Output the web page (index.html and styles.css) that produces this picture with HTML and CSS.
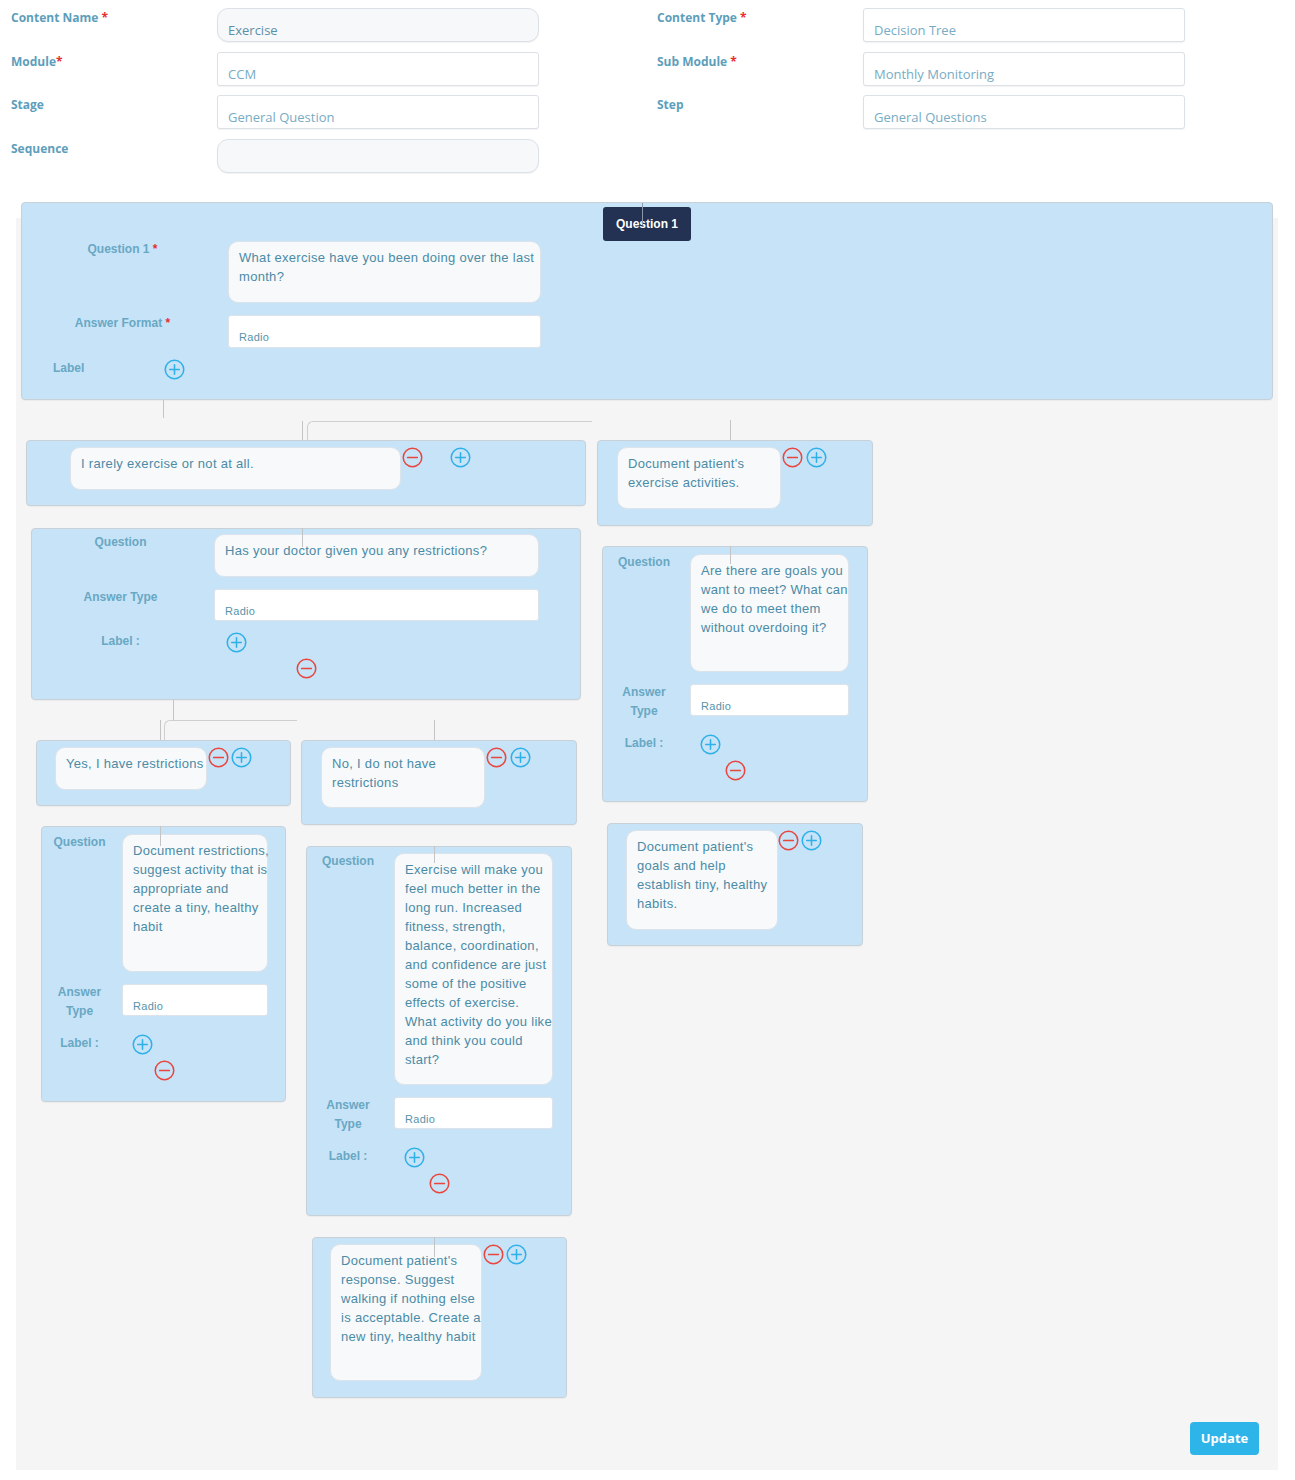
FILE: index.html
```html
<!DOCTYPE html>
<html>
<head>
<meta charset="utf-8">
<title>Decision Tree</title>
<link rel="stylesheet" href="styles.css">
</head>
<body>
<div class="form">
  <div class="fcol">
    <div class="flabel">Content Name <span class="req">*</span></div>
    <div class="finput soft dark">Exercise</div>
    <div class="flabel">Module<span class="req">*</span></div>
    <div class="finput">CCM</div>
    <div class="flabel">Stage</div>
    <div class="finput">General Question</div>
    <div class="flabel">Sequence</div>
    <div class="finput soft"></div>
  </div>
  <div class="fcol">
    <div class="flabel">Content Type <span class="req">*</span></div>
    <div class="finput">Decision Tree</div>
    <div class="flabel">Sub Module <span class="req">*</span></div>
    <div class="finput">Monthly Monitoring</div>
    <div class="flabel">Step</div>
    <div class="finput">General Questions</div>
  </div>
</div>

<div class="canvas">
  <div class="node root">
    <div class="badge">Question 1</div>
    <div class="qgrid root-grid">
      <div class="qlabel">Question 1 <span class="req">*</span></div>
      <div class="tbox h62">What exercise have you been doing over the last<br>month?</div>
      <div class="qlabel">Answer Format <span class="req">*</span></div>
      <div class="sel h33">Radio</div>
    </div>
    <div class="root-label-row">
      <span class="qlabel root-lbl">Label</span>
      <svg class="ico" viewBox="0 0 22 22"><circle cx="11" cy="11" r="9.7" class="c-plus"/><path d="M6 11h10M11 6v10" class="l-plus"/></svg>
    </div>
  </div>

  <div class="tree">
    <div class="branch br-a">
      <div class="node ans ans-a">
        <div class="tbox w331 h43">I rarely exercise or not at all.</div>
        <svg class="ico minus ml1" viewBox="0 0 22 22"><circle cx="11" cy="11" r="9.7" class="c-minus"/><path d="M6 11h10" class="l-minus"/></svg>
        <svg class="ico ml27" viewBox="0 0 22 22"><circle cx="11" cy="11" r="9.7" class="c-plus"/><path d="M6 11h10M11 6v10" class="l-plus"/></svg>
      </div>
      <div class="node q q-a">
        <div class="qgrid g-a">
          <div class="qlabel">Question</div>
          <div class="tbox h43">Has your doctor given you any restrictions?</div>
          <div class="qlabel">Answer Type</div>
          <div class="sel h32">Radio</div>
          <div class="qlabel">Label :</div>
          <div class="icons">
            <svg class="ico plus pl12" viewBox="0 0 22 22"><circle cx="11" cy="11" r="9.7" class="c-plus"/><path d="M6 11h10M11 6v10" class="l-plus"/></svg>
            <svg class="ico minus2 ml82" viewBox="0 0 22 22"><circle cx="11" cy="11" r="9.7" class="c-minus"/><path d="M6 11h10" class="l-minus"/></svg>
          </div>
        </div>
      </div>

      <div class="subtree">
        <div class="branch br-a1">
          <div class="node ans ans-a1">
            <div class="tbox w152 h43">Yes, I have restrictions</div>
            <svg class="ico ml1" viewBox="0 0 22 22"><circle cx="11" cy="11" r="9.7" class="c-minus"/><path d="M6 11h10" class="l-minus"/></svg>
            <svg class="ico ml2" viewBox="0 0 22 22"><circle cx="11" cy="11" r="9.7" class="c-plus"/><path d="M6 11h10M11 6v10" class="l-plus"/></svg>
          </div>
          <div class="node q q-a1">
            <div class="qgrid g-a1">
              <div class="qlabel">Question</div>
              <div class="tbox h138">Document restrictions,<br>suggest activity that is<br>appropriate and<br>create a tiny, healthy<br>habit</div>
              <div class="qlabel">Answer<br>Type</div>
              <div class="sel h32">Radio</div>
              <div class="qlabel lrow">Label :</div>
              <div class="icons lrow">
                <svg class="ico plus pl9" viewBox="0 0 22 22"><circle cx="11" cy="11" r="9.7" class="c-plus"/><path d="M6 11h10M11 6v10" class="l-plus"/></svg>
                <svg class="ico minus2 ml31" viewBox="0 0 22 22"><circle cx="11" cy="11" r="9.7" class="c-minus"/><path d="M6 11h10" class="l-minus"/></svg>
              </div>
            </div>
          </div>
        </div>

        <div class="branch br-a2">
          <div class="node ans ans-a2">
            <div class="tbox w164 h61">No, I do not have<br>restrictions</div>
            <svg class="ico ml1" viewBox="0 0 22 22"><circle cx="11" cy="11" r="9.7" class="c-minus"/><path d="M6 11h10" class="l-minus"/></svg>
            <svg class="ico ml3" viewBox="0 0 22 22"><circle cx="11" cy="11" r="9.7" class="c-plus"/><path d="M6 11h10M11 6v10" class="l-plus"/></svg>
          </div>
          <div class="node q q-a2">
            <div class="qgrid g-a2">
              <div class="qlabel">Question</div>
              <div class="tbox h232">Exercise will make you<br>feel much better in the<br>long run. Increased<br>fitness, strength,<br>balance, coordination,<br>and confidence are just<br>some of the positive<br>effects of exercise.<br>What activity do you like<br>and think you could<br>start?</div>
              <div class="qlabel">Answer<br>Type</div>
              <div class="sel h32">Radio</div>
              <div class="qlabel lrow">Label :</div>
              <div class="icons lrow">
                <svg class="ico plus pl9" viewBox="0 0 22 22"><circle cx="11" cy="11" r="9.7" class="c-plus"/><path d="M6 11h10M11 6v10" class="l-plus"/></svg>
                <svg class="ico minus2 ml34" viewBox="0 0 22 22"><circle cx="11" cy="11" r="9.7" class="c-minus"/><path d="M6 11h10" class="l-minus"/></svg>
              </div>
            </div>
          </div>
          <div class="node ans ans-a2f">
            <div class="tbox w152 h137">Document patient's<br>response. Suggest<br>walking if nothing else<br>is acceptable. Create a<br>new tiny, healthy habit</div>
            <svg class="ico ml1" viewBox="0 0 22 22"><circle cx="11" cy="11" r="9.7" class="c-minus"/><path d="M6 11h10" class="l-minus"/></svg>
            <svg class="ico ml2" viewBox="0 0 22 22"><circle cx="11" cy="11" r="9.7" class="c-plus"/><path d="M6 11h10M11 6v10" class="l-plus"/></svg>
          </div>
        </div>
      </div>
    </div>

    <div class="branch br-b">
      <div class="node ans ans-b">
        <div class="tbox w164 h62">Document patient's<br>exercise activities.</div>
        <svg class="ico ml1" viewBox="0 0 22 22"><circle cx="11" cy="11" r="9.7" class="c-minus"/><path d="M6 11h10" class="l-minus"/></svg>
        <svg class="ico ml3" viewBox="0 0 22 22"><circle cx="11" cy="11" r="9.7" class="c-plus"/><path d="M6 11h10M11 6v10" class="l-plus"/></svg>
      </div>
      <div class="node q q-b">
        <div class="qgrid g-b">
          <div class="qlabel">Question</div>
          <div class="tbox h118">Are there are goals you<br>want to meet? What can<br>we do to meet them<br>without overdoing it?</div>
          <div class="qlabel">Answer<br>Type</div>
          <div class="sel h32">Radio</div>
          <div class="qlabel lrow">Label :</div>
          <div class="icons lrow">
            <svg class="ico plus pl9" viewBox="0 0 22 22"><circle cx="11" cy="11" r="9.7" class="c-plus"/><path d="M6 11h10M11 6v10" class="l-plus"/></svg>
            <svg class="ico minus2 ml34" viewBox="0 0 22 22"><circle cx="11" cy="11" r="9.7" class="c-minus"/><path d="M6 11h10" class="l-minus"/></svg>
          </div>
        </div>
      </div>
      <div class="node ans ans-bf">
        <div class="tbox w152 h100">Document patient's<br>goals and help<br>establish tiny, healthy<br>habits.</div>
        <svg class="ico" viewBox="0 0 22 22"><circle cx="11" cy="11" r="9.7" class="c-minus"/><path d="M6 11h10" class="l-minus"/></svg>
        <svg class="ico ml2" viewBox="0 0 22 22"><circle cx="11" cy="11" r="9.7" class="c-plus"/><path d="M6 11h10M11 6v10" class="l-plus"/></svg>
      </div>
    </div>
  </div>

  <button class="update">Update</button>

  <div class="ln ln-badge"></div>
  <div class="ln ln-root"></div>
  <div class="ln ln-a-in"></div>
  <div class="corner cr-root"></div>
  <div class="ln ln-b-in"></div>
  <div class="ln ln-a-q"></div>
  <div class="ln ln-b-q"></div>
  <div class="ln ln-a-out"></div>
  <div class="ln ln-a1-in"></div>
  <div class="corner cr-a"></div>
  <div class="ln ln-a2-in"></div>
  <div class="ln ln-a1-q"></div>
  <div class="ln ln-a2-q"></div>
  <div class="ln ln-a2-f"></div>
</div>
</body>
</html>
```

FILE: styles.css
```css
* { box-sizing: border-box; }

body {
  margin: 0;
  background: #ffffff;
  font-family: "Liberation Sans", Arial, sans-serif;
}

/* ---------- top form ---------- */
.form {
  display: flex;
  gap: 118px;
  padding: 8px 0 0 11px;
  height: 172px;
}

.fcol {
  display: grid;
  grid-template-columns: 206px 322px;
  grid-auto-rows: 34px;
  row-gap: 9.5px;
  align-content: start;
}

.flabel {
  font: 700 12px/16px "Open Sans", sans-serif;
  color: #5d9ebb;
  padding-top: 2px;
}

.req { color: #e5302f; }

.finput {
  border: 1px solid #dce1e7;
  border-radius: 3px;
  background: #ffffff;
  font: 13px/16px "Open Sans", sans-serif;
  color: #78acc4;
  padding: 13px 0 0 10px;
  box-shadow: 0 1px 1px rgba(0, 0, 0, 0.05);
}

.finput.soft {
  background: #f7f8fa;
  border-radius: 11px;
}

.finput.dark { color: #5d8fa5; }

/* ---------- canvas ---------- */
.canvas {
  position: relative;
  margin: 46px 0 0 16px;
  width: 1262px;
  height: 1252px;
  background: #f5f5f5;
  display: flex;
  flex-direction: column;
}

.node {
  flex: none;
  background: #c7e3f7;
  border: 1px solid #c9d1d8;
  border-radius: 4px;
  box-shadow: 0 1px 1px rgba(0, 0, 0, 0.04);
}

.root {
  margin: -16px 5px 0;
  height: 198px;
  display: flex;
  flex-direction: column;
}

.badge {
  align-self: center;
  margin-top: 4px;
  width: 88px;
  height: 34px;
  background: #233152;
  color: #ffffff;
  font: 700 12px/34px "Liberation Sans", Arial, sans-serif;
  text-align: center;
  border-radius: 3px;
}

.qgrid {
  display: grid;
  row-gap: 12px;
  column-gap: 5px;
  align-items: start;
}

.root-grid {
  grid-template-columns: 201px 313px;
  margin-top: 0;
}

.qlabel {
  font: 700 12px/19px "Liberation Sans", Arial, sans-serif;
  color: #68a8c4;
  text-align: center;
  margin-top: -1.5px;
}

.root-label-row {
  display: flex;
  align-items: flex-start;
  margin-top: 11px;
  padding-left: 31px;
}

.root-lbl {
  width: 111px;
  text-align: left;
  margin-top: 0;
}

.tbox {
  background: #f7f9fb;
  border: 1px solid #dde3ea;
  border-radius: 10px;
  font: 13px/19px "Liberation Sans", Arial, sans-serif;
  letter-spacing: 0.3px;
  color: #4b8ba6;
  padding: 5.5px 0 0 10px;
  white-space: nowrap;
  flex: none;
}

.sel {
  background: #ffffff;
  border: 1px solid #dde3ea;
  border-radius: 3px;
  font: 11px/13px "Liberation Sans", Arial, sans-serif;
  letter-spacing: 0.3px;
  color: #5893ab;
  padding: 14.5px 0 0 10px;
}

.h32 { height: 32px; }
.h33 { height: 33px; }
.h43 { height: 43px; }
.h61 { height: 61px; }
.h62 { height: 62px; }
.h100 { height: 100px; }
.h118 { height: 118px; }
.h137 { height: 137px; }
.h138 { height: 138px; }
.h232 { height: 232px; }
.w152 { width: 152px; }
.w164 { width: 164px; }
.w331 { width: 331px; }

/* icons */
.ico {
  display: block;
  flex: none;
  width: 21px;
  height: 21px;
}
.c-plus { fill: none; stroke: #2eb0e8; stroke-width: 1.6; }
.l-plus { stroke: #2eb0e8; stroke-width: 1.6; stroke-linecap: round; }
.c-minus { fill: none; stroke: #e8463f; stroke-width: 1.6; }
.l-minus { stroke: #e8463f; stroke-width: 1.8; stroke-linecap: round; }

.ml1 { margin-left: 1px; }
.ml2 { margin-left: 2px; }
.ml3 { margin-left: 3px; }
.ml27 { margin-left: 27px; }

.icons {
  display: flex;
  flex-direction: column;
  align-items: flex-start;
}
.icons .plus { margin-top: -1.5px; }
.icons .minus2 { margin-top: 5px; }
.pl12 { margin-left: 12px; }
.pl9 { margin-left: 9.5px; }
.ml82 { margin-left: 82px; }
.ml31 { margin-left: 31.5px; }
.ml34 { margin-left: 34.5px; }
.qlabel.lrow { margin-top: 1.5px; }
.icons.lrow { margin-top: 3px; }

/* ---------- tree ---------- */
.tree {
  display: flex;
  align-items: flex-start;
  gap: 11px;
  margin-top: 40px;
  padding-left: 10px;
}

.branch {
  display: flex;
  flex-direction: column;
  flex: none;
}

.br-a { width: 560px; }
.br-a1 { width: 255px; }
.br-a2 { width: 276px; }
.br-b { width: 276px; }

.subtree {
  display: flex;
  align-items: flex-start;
  gap: 10px;
  margin-top: 40px;
  padding-left: 10px;
}

.ans {
  display: flex;
  align-items: flex-start;
  padding-top: 6px;
}

.ans-a { height: 66px; margin-bottom: 22px; padding-left: 43px; }
.ans-a1 { height: 66px; margin-bottom: 20px; padding-left: 18px; }
.ans-a2 { height: 85px; margin-bottom: 21px; padding-left: 19px; }
.ans-a2f { height: 161px; margin: 0 10px 0 11px; padding-left: 17px; }
.ans-b { height: 86px; margin-bottom: 20px; padding-left: 19px; }
.ans-bf { height: 123px; margin: 0 10px; padding-left: 18px; }

.q { margin: 0 5px; }
.q-a { height: 172px; padding-top: 5px; }
.q-a1 { height: 276px; padding-top: 7px; }
.q-a2 { height: 370px; padding-top: 6px; margin-bottom: 21px; }
.q-b { height: 256px; padding-top: 7px; margin-bottom: 21px; }

.g-a { grid-template-columns: 177px 325px; }
.g-a1 { grid-template-columns: 75px 146px; }
.g-a2 { grid-template-columns: 82px 159px; }
.g-b { grid-template-columns: 82px 159px; }

/* ---------- update button ---------- */
.update {
  margin: auto 19px 15px 0;
  align-self: flex-end;
  width: 69px;
  height: 33px;
  border: none;
  border-radius: 4px;
  background: #2db4e8;
  color: #ffffff;
  font: 700 13px/33px "Open Sans", sans-serif;
  padding: 0;
}

/* ---------- connector lines (overlay) ---------- */
.ln {
  position: absolute;
  width: 1px;
  background: #c4c4c4;
  z-index: 5;
}

.corner {
  position: absolute;
  border-top: 1px solid #cfcfcf;
  border-left: 1px solid #cfcfcf;
  border-top-left-radius: 6px;
  z-index: 5;
}

.ln-badge { left: 626px; top: -15px; height: 22px; background: #8d97a8; }
.ln-root { left: 147px; top: 182px; height: 18px; }
.ln-a-in { left: 286px; top: 203px; height: 19px; }
.cr-root { left: 291px; top: 203px; width: 285px; height: 19px; }
.ln-b-in { left: 714px; top: 202px; height: 20px; }
.ln-a-q { left: 286px; top: 310px; height: 19px; }
.ln-b-q { left: 714px; top: 328px; height: 18px; }
.ln-a-out { left: 157px; top: 482px; height: 20px; }
.ln-a1-in { left: 144px; top: 502px; height: 20px; }
.cr-a { left: 148px; top: 502px; width: 133px; height: 20px; }
.ln-a2-in { left: 418px; top: 502px; height: 20px; }
.ln-a1-q { left: 144px; top: 608px; height: 20px; }
.ln-a2-q { left: 418px; top: 628px; height: 17px; }
.ln-a2-f { left: 418px; top: 1019px; height: 20px; }
```
